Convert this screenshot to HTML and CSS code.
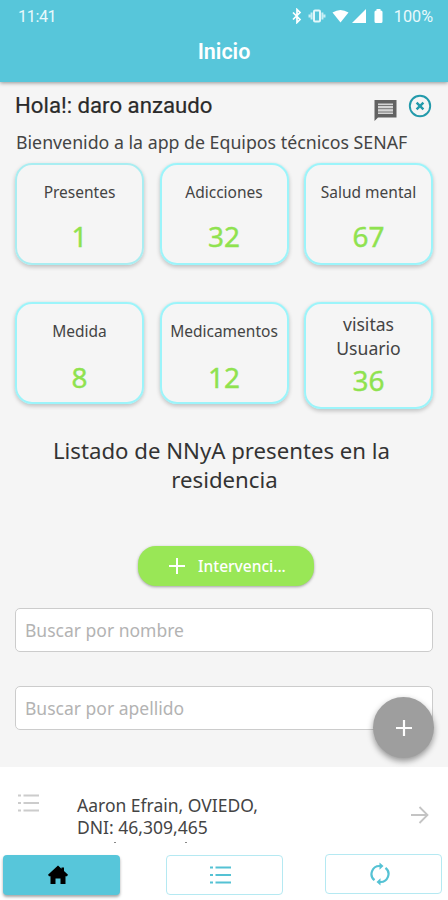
FILE: index.html
```html
<!DOCTYPE html>
<html lang="es">
<head>
    <meta charset="UTF-8">
    <meta name="viewport" content="width=device-width, initial-scale=1.0">
    <title>Inicio</title>
    <link rel="stylesheet" href="styles.css">
</head>
<body>
    <div class="app">
        <header class="header">
            <div class="status-bar">
                <span class="clock">11:41</span>
                <div class="status-icons">
                    <svg width="10" height="16" viewBox="0 0 10 16"><path d="M1 4.500l7 7L5 14.500V1.500L8 4.500l-7 7" fill="none" stroke="#fff" stroke-width="1.700"/></svg>
                    <svg class="vibrate" width="18" height="16" viewBox="0 0 18 16"><rect x="6" y="2.500" width="6" height="11" rx="1" fill="none" stroke="#e4f7fa" stroke-width="2"/><path d="M3.600 4.500v7M1.500 6.500v3M14.400 4.500v7M16.500 6.500v3" stroke="#c8eff5" stroke-width="2"/></svg>
                    <svg class="wifi" width="17" height="16" viewBox="0 0 17 16"><path d="M.5 4.500Q8.500-.5 16.500 4.500L8.500 14.500z" fill="#fff"/></svg>
                    <svg class="signal" width="14" height="16" viewBox="0 0 14 16"><path d="M14 1v14H0z" fill="#fff"/></svg>
                    <svg class="battery" width="9" height="16" viewBox="0 0 9 16"><path d="M2.500 1h4v1.500H7q1.500 0 1.500 1.500v9.500Q8.500 15 7 15H2Q.5 15 .5 13.500V4q0-1.500 1.500-1.500h.5z" fill="#fff"/></svg>
                    <span>100%</span>
                </div>
            </div>
            <h1 class="title">Inicio</h1>
        </header>

        <main class="content">
            <div class="greeting">
                <h2>Hola!: daro anzaudo</h2>
                <div class="greeting-actions">
                    <svg class="chat" width="24" height="24" viewBox="0 0 24 24"><path d="M1.500 1h22v17.500H5L1.500 22z" fill="#626262"/><path d="M5 4.500h15V15H5z" fill="#d4d4d4"/><path d="M5 6.500h15M5 9.700h15M5 13h15" stroke="#777" stroke-width="1"/></svg>
                    <svg width="24" height="24" viewBox="0 0 24 24"><circle cx="12" cy="12" r="10.200" fill="none" stroke="#239aab" stroke-width="1.900"/><path d="M8.600 8.600l6.800 6.800M15.400 8.600l-6.800 6.800" stroke="#239aab" stroke-width="2.400"/></svg>
                </div>
            </div>
            <p class="welcome">Bienvenido a la app de Equipos técnicos SENAF</p>

            <div class="cards">
                <div class="card card-soft">
                    <span class="label">Presentes</span>
                    <span class="number">1</span>
                </div>
                <div class="card">
                    <span class="label">Adicciones</span>
                    <span class="number">32</span>
                </div>
                <div class="card">
                    <span class="label">Salud mental</span>
                    <span class="number">67</span>
                </div>
                <div class="card card-low">
                    <span class="label">Medida</span>
                    <span class="number">8</span>
                </div>
                <div class="card card-low">
                    <span class="label">Medicamentos</span>
                    <span class="number">12</span>
                </div>
                <div class="card card-tall">
                    <span class="label">visitas<br>Usuario</span>
                    <span class="number">36</span>
                </div>
            </div>

            <h3 class="list-title">Listado de NNyA presentes en la <span>residencia</span></h3>

            <button class="add-btn">
                <svg width="16" height="16" viewBox="0 0 16 16"><path d="M8 0v16M0 8h16" stroke="#fff" stroke-width="2"/></svg>
                <span>Intervenci...</span>
            </button>

            <input class="search" type="text" placeholder="Buscar por nombre">
            <input class="search" type="text" placeholder="Buscar por apellido">
        </main>

        <section class="list-item">
            <svg class="item-icon" width="22" height="18" viewBox="0 0 22 18"><path d="M0 1.500h3M0 9h3M0 16.500h3M5.500 1.500H21M5.500 9H21M5.500 16.500H21" stroke="#ccc" stroke-width="2"/></svg>
            <div class="item-body">
                <p class="item-text">Aaron Efrain, OVIEDO,<br>DNI: 46,309,465</p>
                <div class="item-more"><i></i><i></i></div>
            </div>
            <svg class="item-arrow" width="18" height="18" viewBox="0 0 18 18"><path d="M0 9h16M8.500 1l8 8-8 8" fill="none" stroke="#c4c4c4" stroke-width="1.800"/></svg>
        </section>

        <nav class="tabs">
            <button class="tab tab-active">
                <svg width="20" height="20" viewBox="0 0 20 20"><path d="M10 .5l3.500 3.200V2.500H16v3.500l4 3.800-1 1.400h-1.500V19h-5v-5.500h-5V19h-5v-7.800H1L0 9.800z" fill="#000"/></svg>
            </button>
            <button class="tab">
                <svg width="22" height="18" viewBox="0 0 22 18"><path d="M0 1.500h3M0 9h3M0 16.500h3M5.500 1.500H21M5.500 9H21M5.500 16.500H21" stroke="#55c2d4" stroke-width="2.200"/></svg>
            </button>
            <button class="tab tab-refresh">
                <svg width="20" height="24" viewBox="0 0 20 24"><path d="M4.500 18.200A8 8 0 0 1 10 4M15.500 5.800A8 8 0 0 1 10 20" fill="none" stroke="#55c2d4" stroke-width="2.200"/><path d="M9.500.5L13.500 4l-4 3.700zM10.500 16.300L6.500 20l4 3.500z" fill="#55c2d4"/></svg>
            </button>
        </nav>

        <button class="fab">
            <svg width="16" height="16" viewBox="0 0 16 16"><path d="M8 0v16M0 8h16" stroke="#fff" stroke-width="2.200"/></svg>
        </button>
    </div>
</body>
</html>
```
FILE: styles.css
```css
body {
    font-family: "Noto Sans", sans-serif;
    margin: 0;
    background: #f5f5f5;
    color: #444;
}

* {
    box-sizing: border-box;
}

svg {
    display: block;
    flex-shrink: 0;
}

h1, h2, h3, p {
    margin: 0;
    font-weight: 400;
}

button {
    border: none;
    padding: 0;
    font-family: inherit;
}

.app {
    position: relative;
    width: 448px;
    height: 900px;
    display: flex;
    flex-direction: column;
    overflow: hidden;
}

.header {
    height: 82px;
    flex-shrink: 0;
    background: #57c6da;
    color: #fff;
    box-shadow: 0 1px 4px rgba(0, 0, 0, 0.4);
}

.status-bar {
    display: flex;
    justify-content: space-between;
    height: 32px;
    padding: 0 15px 0 18px;
    align-items: center;
    font-family: Roboto, sans-serif;
    font-size: 16.2px;
    color: #e9f9fc;
}

.clock {
    letter-spacing: -0.4px;
}

.status-icons {
    display: flex;
    align-items: center;
}

.vibrate {
    margin-left: 6px;
}

.wifi {
    margin-left: 6px;
}

.signal {
    margin-left: 3px;
}

.battery {
    margin-left: 8px;
    margin-right: 11px;
}

.title {
    font-family: Roboto, sans-serif;
    font-size: 21.5px;
    font-weight: 600;
    line-height: 40px;
    text-align: center;
}

.content {
    padding: 0 15px;
    height: 685px;
    flex-shrink: 0;
    display: flex;
    flex-direction: column;
}

.greeting {
    display: flex;
    justify-content: space-between;
    padding-top: 9px;
    height: 45px;
}

.greeting h2 {
    font-family: Roboto, sans-serif;
    font-size: 22.2px;
    line-height: 28px;
    color: #2a2a2a;
    -webkit-text-stroke: 0.2px #2a2a2a;
}

.greeting-actions {
    display: flex;
    gap: 11px;
    padding-top: 3px;
    margin-right: 1px;
}

.chat {
    margin-top: 5px;
}

.welcome {
    font-size: 17.75px;
    line-height: 30px;
    padding-left: 1px;
    white-space: nowrap;
}

.cards {
    display: grid;
    grid-template-columns: repeat(3, 129px);
    justify-content: space-between;
    align-items: start;
    row-gap: 37px;
    margin-top: 6px;
}

.card {
    height: 102px;
    border: 2px solid #9cf4fa;
    border-radius: 17px;
    box-shadow: 0 0 1px #9cf4fa, 0 2px 4px rgba(0, 0, 0, 0.22);
    display: flex;
    flex-direction: column;
    align-items: center;
    padding-top: 15px;
}

.card-soft {
    border-color: #a9edf1;
    box-shadow: 0 2px 4px rgba(0, 0, 0, 0.22);
}

.label {
    font-size: 15.5px;
    line-height: 24px;
    white-space: nowrap;
    text-align: center;
}

.number {
    font-size: 28px;
    line-height: 36px;
    margin-top: 14px;
    color: #8fe24f;
    -webkit-text-stroke: 0.4px #8fe24f;
}

.card-low .number {
    margin-top: 16px;
}

.card-tall {
    height: 107px;
    padding-top: 8px;
}

.card-tall .label {
    font-size: 17.6px;
}

.card-tall .number {
    margin-top: 2px;
}

.list-title {
    font-size: 22.2px;
    line-height: 29px;
    text-align: center;
    margin-top: 27px;
    margin-right: 5px;
    color: #333;
}

.list-title span {
    display: block;
    margin-left: 6px;
}

.add-btn {
    width: 176px;
    height: 40px;
    flex-shrink: 0;
    margin: 52px 0 0 123px;
    border-radius: 18px;
    background: #99e756;
    color: #fff;
    font-size: 15.5px;
    font-weight: 500;
    display: flex;
    align-items: center;
    padding-left: 31px;
    gap: 13px;
    box-shadow: 0 1px 3px rgba(0, 0, 0, 0.35);
}

.search {
    width: 100%;
    height: 44px;
    flex-shrink: 0;
    margin: 22px 0 0;
    padding: 0 9px 1px;
    border: 1px solid #ccc;
    border-radius: 5px;
    background: #fff;
    font-family: inherit;
    font-size: 17.5px;
}

.search + .search {
    margin-top: 34px;
}

.search::placeholder {
    color: #b3b3b3;
}

.list-item {
    height: 77px;
    flex-shrink: 0;
    background: #fff;
    display: flex;
    align-items: flex-start;
    padding: 27px 19px 0 18px;
    overflow: hidden;
}

.item-icon {
    margin-right: 37px;
}

.item-body {
    flex: 1;
}

.item-text {
    font-size: 17.5px;
    line-height: 22px;
}

/* inicio de la línea cortada por la barra inferior */
.item-more {
    display: flex;
    gap: 69px;
    padding: 4px 0 0 37px;
}

.item-more i {
    width: 2px;
    height: 1px;
    background: #888;
}

.item-arrow {
    margin-top: 12px;
}

.tabs {
    flex: 1;
    background: #fff;
    display: flex;
    align-items: flex-start;
    padding: 11px 0 0 3px;
}

.tab {
    width: 117px;
    height: 40px;
    margin-left: 46px;
    padding-right: 7px;
    border: 1px solid #b5e9f2;
    border-radius: 4px;
    background: #fff;
    display: flex;
    align-items: center;
    justify-content: center;
}

.tab-active {
    margin-left: 0;
    background: #57c6da;
    border: none;
    box-shadow: 0 2px 3px rgba(0, 0, 0, 0.35);
}

.tab-refresh {
    margin-top: -1px;
    margin-left: 42px;
}

/* botón flotante */
.fab {
    position: absolute;
    right: 14px;
    top: 697px;
    width: 61px;
    height: 61px;
    border-radius: 50%;
    background: #9e9e9e;
    display: flex;
    align-items: center;
    justify-content: center;
    box-shadow: 0 3px 6px rgba(0, 0, 0, 0.4);
}
```
